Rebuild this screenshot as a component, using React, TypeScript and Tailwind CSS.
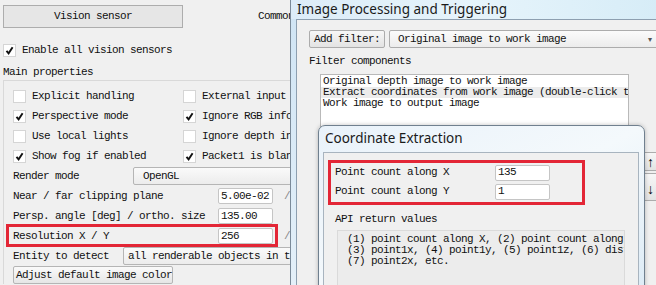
import React from 'react';

const mono = "font-['Liberation_Mono','DejaVu_Sans_Mono',monospace] text-[11px] tracking-[-0.6px] text-[#111] whitespace-nowrap";
const ui = "font-['Noto_Sans','Open_Sans',sans-serif]";

const Check: React.FC<{ on?: boolean }> = ({ on }) => (
  <div className="w-[13px] h-[13px] bg-white border border-[#d5d5d5] flex items-center justify-center shrink-0">
    {on && (
      <svg width="9" height="9" viewBox="0 0 9 9">
        <path d="M1.5 4.8 L3.6 7.3 L7.6 1.2" fill="none" stroke="#111" strokeWidth="1.9" />
      </svg>
    )}
  </div>
);

const Field: React.FC<{ value: string; w?: string }> = ({ value, w = 'w-[55px]' }) => (
  <div className={`${w} h-[16px] bg-white border border-[#c5c5c5] rounded-[2px] flex items-center pl-[2px] shrink-0`}>
    <span className={mono}>{value}</span>
  </div>
);

const App: React.FC = () => {
  const checks = [
    ['Explicit handling', false, 'External input', false],
    ['Perspective mode', true, 'Ignore RGB info', true],
    ['Use local lights', false, 'Ignore depth info', false],
    ['Show fog if enabled', true, 'Packet1 is blank', true],
  ] as const;

  return (
    <div className="w-[656px] h-[285px] flex overflow-hidden bg-[#f0f0f0]">
      {/* Left: vision sensor properties */}
      <div className="w-[290px] h-full shrink-0 overflow-hidden flex flex-col">
        <div className="h-[32px] flex items-start pt-[5px] pl-[3px] gap-[3px] shrink-0">
          <div className="w-[180px] h-[23px] shrink-0 border border-[#adadad] bg-[#e6e6e6] flex items-center justify-center">
            <span className={mono}>Vision sensor</span>
          </div>
          <div className="w-[180px] h-[23px] flex items-center justify-center shrink-0">
            <span className={mono}>Common</span>
          </div>
        </div>

        <div className="flex items-center ml-[3px] mt-[12px] h-[13px]">
          <Check on />
          <span className={`${mono} ml-[6px]`}>Enable all vision sensors</span>
        </div>

        <div className={`${mono} ml-[3px] mt-[8px] leading-[14px]`}>Main properties</div>

        <div className="ml-[3px] mt-[1px] border-l border-t border-[#d9d9d9] pl-[9px] pt-[5px] w-[400px]">
          {checks.map(([a, aOn, b, bOn]) => (
            <div key={a} className="h-[20px] flex items-center">
              <div className="w-[170px] flex items-center">
                <Check on={aOn} />
                <span className={`${mono} ml-[6px]`}>{a}</span>
              </div>
              <Check on={bOn} />
              <span className={`${mono} ml-[6px]`}>{b}</span>
            </div>
          ))}

          <div className="h-[20px] flex items-center">
            <span className={`${mono} w-[120px]`}>Render mode</span>
            <div className="w-[200px] h-[18px] border border-[#b5b5b5] bg-gradient-to-b from-[#fafafa] to-[#ececec] rounded-[2px] flex items-center pl-[9px]">
              <span className={mono}>OpenGL</span>
            </div>
          </div>

          <div className="h-[20px] flex items-center">
            <span className={`${mono} w-[205px]`}>Near / far clipping plane</span>
            <Field value="5.00e-02" />
            <span className={`${mono} ml-[11px] text-[#888]`}>/</span>
          </div>

          <div className="h-[20px] flex items-center">
            <span className={`${mono} w-[205px]`}>Persp. angle [deg] / ortho. size</span>
            <Field value="135.00" />
          </div>

          <div className="h-[20px] flex items-center relative">
            <span className={`${mono} w-[205px]`}>Resolution X / Y</span>
            <Field value="256" />
            <span className={`${mono} ml-[11px] text-[#888]`}>/</span>
            <div className="absolute left-[-7px] top-[-2px] w-[272px] h-[23px] border-[3px] border-[#e32636]" />
          </div>

          <div className="h-[20px] flex items-center">
            <span className={`${mono} w-[110px]`}>Entity to detect</span>
            <div className="w-[220px] h-[18px] border border-[#b5b5b5] bg-gradient-to-b from-[#fafafa] to-[#ececec] rounded-[2px] flex items-center pl-[4px]">
              <span className={mono}>all renderable objects in the scene</span>
            </div>
          </div>

          <div className="h-[18px] w-[160px] border border-[#b5b5b5] bg-gradient-to-b from-[#fafafa] to-[#e6e6e6] rounded-[2px] flex items-center pl-[2px]">
            <span className={mono}>Adjust default image color</span>
          </div>
        </div>
      </div>

      {/* Right: Image Processing and Triggering window */}
      <div className="flex-1 h-full relative border-l border-[#7a8a99] bg-gradient-to-b from-[#cfe4f4] to-[#e4f0f9] flex flex-col">
        <div className="h-[19px] shrink-0 pl-[6px] flex items-center bg-gradient-to-r from-[#dcecf8] via-[#e6f4fb] to-[#d6ecf7]">
          <span className={`${ui} text-[13.5px] text-[#1a1a1a] leading-none`}>Image Processing and Triggering</span>
        </div>
        <div className="flex-1 ml-[5px] border-l border-t border-[#8d9fb0] bg-[#f0f0f0] flex flex-col">
          <div className="flex items-center mt-[10px] ml-[12px] gap-[4px]">
            <div className="w-[76px] h-[18px] border border-[#acacac] rounded-[2px] bg-gradient-to-b from-[#f7f7f7] to-[#e3e3e3] flex items-center justify-center shrink-0">
              <span className={mono}>Add filter:</span>
            </div>
            <div className="w-[272px] h-[18px] border border-[#acacac] rounded-[2px] bg-gradient-to-b from-[#fbfbfb] to-[#ececec] flex items-center pl-[8px] justify-between shrink-0">
              <span className={mono}>Original image to work image</span>
              <span className="text-[8px] text-[#555] mr-[8px]">▾</span>
            </div>
          </div>

          <div className={`${mono} ml-[12px] mt-[6px] leading-[14px]`}>Filter components</div>

          <div className="flex mt-[6px] ml-[23px]">
            <div className="w-[309px] h-[100px] bg-white border border-[#b9b9b9] pt-[1px] shrink-0 overflow-hidden">
              {['Original depth image to work image', 'Extract coordinates from work image (double-click to edit)', 'Work image to output image'].map((t, i) => (
                <div key={t} className={`${mono} leading-[11px] pl-[2px] ${i === 1 ? 'bg-[#ececec]' : ''}`}>{t}</div>
              ))}
            </div>
            <div className="ml-[15px] mt-[78px] flex flex-col gap-[2px]">
              <div className="w-[20px] h-[19px] border border-[#acacac] bg-gradient-to-b from-[#f7f7f7] to-[#e3e3e3] pl-[2px] text-[14px] font-bold leading-[18px] text-black">↑</div>
              <div className="w-[20px] h-[28px] border border-[#acacac] bg-gradient-to-b from-[#f7f7f7] to-[#e3e3e3] pl-[2px] pt-[6px] text-[14px] font-bold leading-[18px] text-black">↓</div>
            </div>
          </div>
        </div>

        {/* Coordinate Extraction dialog on top */}
        <div className="absolute left-[27px] top-[125px] w-[327px] h-[175px] rounded-t-[7px] border border-[#70808f] bg-gradient-to-br from-[#e9f2fa] via-[#f4f9fc] to-[#dcebf6] flex flex-col shadow-[0_0_4px_rgba(0,0,0,0.25)]">
          <div className="h-[26px] shrink-0 pl-[6px] flex items-center">
            <span className={`${ui} text-[13.5px] text-[#1a1a1a] leading-none`}>Coordinate Extraction</span>
          </div>
          <div className="flex-1 ml-[4px] mr-[5px] border border-[#a8b4bf] bg-[#f0f0f0] flex flex-col">
            <div className="ml-[4px] mt-[7px] w-[257px] h-[45px] border-[3px] border-[#e32636] pl-[4px] flex flex-col">
              <div className="h-[19px] flex items-center">
                <span className={`${mono} w-[160px]`}>Point count along X</span>
                <Field value="135" />
              </div>
              <div className="h-[19px] flex items-center">
                <span className={`${mono} w-[160px]`}>Point count along Y</span>
                <Field value="1" />
              </div>
            </div>
            <div className={`${mono} ml-[11px] mt-[7px] leading-[14px]`}>API return values</div>
            <div className="ml-[13px] mt-[4px] w-[288px] h-[60px] bg-[#ececec] border border-[#dadada] pt-[3px] pl-[9px] overflow-hidden">
              {['(1) point count along X, (2) point count along Y,', '(3) point1x, (4) point1y, (5) point1z, (6) distance1,', '(7) point2x, etc.'].map((t) => (
                <div key={t} className={`${mono} leading-[11px]`}>{t}</div>
              ))}
            </div>
          </div>
        </div>
      </div>
    </div>
  );
};

export default App;
